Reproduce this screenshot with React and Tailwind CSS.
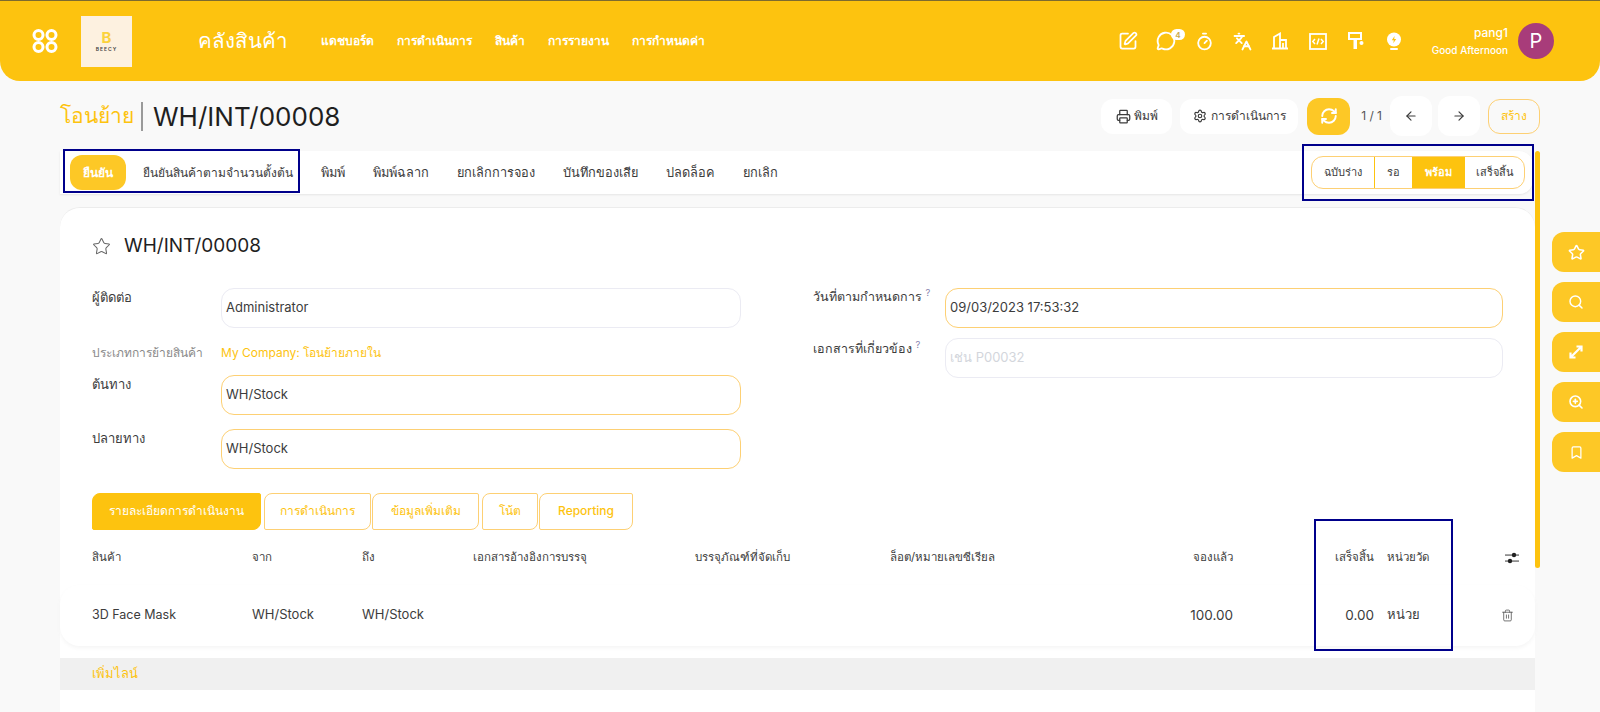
import React from 'react';
import { SquarePen, MessageCircle, Timer, Languages, Printer, Settings, RefreshCw, ArrowLeft, ArrowRight, Star, Search, ZoomIn, Bookmark, Trash2 } from 'lucide-react';

const navItems = ['แดชบอร์ด', 'การดำเนินการ', 'สินค้า', 'การรายงาน', 'การกำหนดค่า'];
const actions = ['พิมพ์', 'พิมพ์ฉลาก', 'ยกเลิกการจอง', 'บันทึกของเสีย', 'ปลดล็อค', 'ยกเลิก'];

const GridLogo = () => (
  <svg width="26" height="24" viewBox="0 0 26 24" fill="none" stroke="white" strokeWidth="3">
    <circle cx="6.5" cy="6" r="4.5" />
    <circle cx="19.5" cy="6" r="4.5" />
    <circle cx="6.5" cy="18" r="4.5" />
    <circle cx="19.5" cy="18" r="4.5" />
  </svg>
);

const BuildingIcon = () => (
  <svg width="18" height="18" viewBox="0 0 18 18" fill="none" stroke="white" strokeWidth="1.8">
    <path d="M1 16.5h16M3 16.5V5l6-3.5v15M9 8h6v8.5M12 11v5.5" />
  </svg>
);

const CodeIcon = () => (
  <svg width="18" height="17" viewBox="0 0 18 17" fill="none" stroke="white">
    <rect x="1" y="1" width="16" height="15" strokeWidth="1.8" />
    <path d="M6 6 3.8 8.5 6 11M12 6l2.2 2.5L12 11M10 5.5l-2 6" strokeWidth="1.5" />
  </svg>
);

const RollerIcon = () => (
  <svg width="16" height="18" viewBox="0 0 16 18" fill="white">
    <path d="M1 1h12v6H1z" fill="none" stroke="white" strokeWidth="2" />
    <rect x="5.5" y="7" width="3.5" height="10" />
    <circle cx="13.5" cy="11" r="2" />
  </svg>
);

const BulbIcon = () => (
  <svg width="16" height="19" viewBox="0 0 16 19" fill="white">
    <circle cx="8" cy="7.5" r="7" />
    <rect x="4" y="16" width="8" height="2" rx="1" />
    <path d="M8.6 4 5.8 8.2h2l-.5 3 2.9-4.3h-2z" fill="#fdc30f" />
  </svg>
);

const ExpandIcon = () => (
  <svg width="16" height="16" viewBox="0 0 16 16" fill="none" stroke="white" strokeWidth="2.2">
    <path d="M3 13 13 3M8.5 2.5h5v5M2.5 8.5v5h5" />
  </svg>
);

const SlidersIcon = () => (
  <svg width="14" height="12" viewBox="0 0 14 12" fill="#222">
    <rect x="0" y="2.6" width="14" height="0.9" />
    <rect x="0" y="8.6" width="14" height="0.9" />
    <circle cx="9" cy="3" r="2.2" />
    <circle cx="5" cy="9" r="2.2" />
  </svg>
);

const Field = ({ value, active, placeholder }) => (
  <div className={`flex h-[40px] flex-1 items-center rounded-[13px] border bg-white px-[4px] text-[13px] ${active ? 'border-[#fdd074]' : 'border-[#ebebf3]'} ${placeholder ? 'text-[#d3d6dc]' : 'text-[#3c3c3c]'}`}>
    {value}
  </div>
);

const Tab = ({ label, active }) => (
  <div className={`flex h-[37px] items-center justify-center rounded-tl-[8px] rounded-br-[8px] rounded-tr-[2px] rounded-bl-[2px] border text-[12px] font-medium ${active ? 'border-[#fdc30f] bg-[#fdc30f] text-white' : 'border-[#fdd074] bg-white text-[#fdc30f]'}`}>
    {label}
  </div>
);

const Row = ({ cols }) => (
  <div className="grid w-full grid-cols-[160px_110px_111px_222px_195px_250px_93px_141px_117px_1fr] items-center">
    {cols}
  </div>
);

export default function App() {
  return (
    <div className="relative h-[712px] w-[1600px] overflow-hidden bg-[#f9f9f9] font-['Inter','Noto_Sans',sans-serif] text-[#3c3c3c]">
      <header className="flex h-[81px] items-center rounded-b-[20px] border-t border-[#7d6b2f] bg-[#fdc30f] pl-[32px] pr-[46px] text-white">
        <GridLogo />
        <div className="ml-[23px] flex h-[51px] w-[51px] flex-col items-center justify-center bg-[#fdf1e0]">
          <span className="text-[15px] font-bold leading-[15px] text-[#fbd23c]">B</span>
          <span className="text-[5px] font-semibold leading-[8px] tracking-[1px] text-[#444]">BEECY</span>
        </div>
        <div className="ml-[66px] text-[20.5px] font-medium">คลังสินค้า</div>
        <nav className="ml-[33px] flex gap-[23px] text-[12px] font-semibold">
          {navItems.map((item) => <span key={item}>{item}</span>)}
        </nav>
        <div className="ml-[404px] flex items-center">
          <span className="flex w-[38px] justify-center"><SquarePen size={20} strokeWidth={2.1} /></span>
          <span className="relative flex w-[38px] justify-center">
            <MessageCircle size={20} strokeWidth={2.2} />
            <span className="absolute right-0 top-[-2px] flex h-[11px] w-[14px] items-center justify-center rounded-full bg-white text-[8px] font-semibold text-[#c9a94a]">4</span>
          </span>
          <span className="flex w-[38px] justify-center"><Timer size={19} strokeWidth={2.3} /></span>
          <span className="flex w-[38px] justify-center"><Languages size={19} strokeWidth={2.4} /></span>
          <span className="flex w-[38px] justify-center"><BuildingIcon /></span>
          <span className="flex w-[38px] justify-center"><CodeIcon /></span>
          <span className="flex w-[38px] justify-center"><RollerIcon /></span>
          <span className="flex w-[38px] justify-center"><BulbIcon /></span>
        </div>
        <div className="ml-auto flex flex-col items-end">
          <span className="text-[12px] font-medium leading-[16px]">pang1</span>
          <span className="mt-[2px] text-[10px] font-medium leading-[14px]">Good Afternoon</span>
        </div>
        <div className="ml-[10px] flex h-[36px] w-[36px] items-center justify-center rounded-full bg-[#a83c7a] text-[20px]">P</div>
      </header>

      <div className="mt-[15px] flex h-[40px] items-center pl-[60px] pr-[60px]">
        <span className="text-[21px] text-[#fdc30f]">โอนย้าย</span>
        <span className="ml-[7px] h-[29px] w-[2px] bg-[#9a9a9a]" />
        <span className="ml-[10px] text-[26px] text-[#1f1f1f]">WH/INT/00008</span>
        <div className="ml-auto flex items-center">
          <button className="flex h-[35px] w-[71px] items-center justify-center gap-[3px] rounded-[12px] bg-white text-[12px]"><Printer size={15} />พิมพ์</button>
          <button className="ml-[8px] flex h-[35px] w-[118px] items-center justify-center gap-[4px] rounded-[12px] bg-white text-[12px]"><Settings size={14} />การดำเนินการ</button>
          <button className="ml-[9px] flex h-[37px] w-[43px] items-center justify-center rounded-[12px] bg-[#fdc826] text-white"><RefreshCw size={18} strokeWidth={2.6} /></button>
          <span className="ml-[11px] text-[12px] text-[#555]">1 / 1</span>
          <button className="ml-[8px] flex h-[40px] w-[42px] items-center justify-center rounded-[12px] bg-white"><ArrowLeft size={14} /></button>
          <button className="ml-[6px] flex h-[40px] w-[42px] items-center justify-center rounded-[12px] bg-white"><ArrowRight size={14} /></button>
          <button className="ml-[8px] h-[35px] w-[52px] rounded-[12px] border border-[#fdd074] text-[12px] text-[#fdc30f]">สร้าง</button>
        </div>
      </div>

      <div className="ml-[60px] mt-[15px] flex h-[43px] w-[1473px] items-center rounded-r-[14px] bg-white pl-[10px] pr-[8px] shadow-[0_1px_2px_#e5e5e5]">
        <button className="h-[35px] w-[56px] rounded-[12px] bg-[#fdc826] text-[12px] font-semibold text-white">ยืนยัน</button>
        <span className="ml-[17px] text-[12px]">ยืนยันสินค้าตามจำนวนตั้งต้น</span>
        <div className="ml-[28px] flex gap-[28px] text-[12.75px]">
          {actions.map((item) => <span key={item}>{item}</span>)}
        </div>
        <div className="ml-auto flex h-[33px] w-[214px] overflow-hidden rounded-[12px] border border-[#fdd074] text-[11px]">
          <span className="flex w-[63px] items-center justify-center border-r border-[#fdc30f]">ฉบับร่าง</span>
          <span className="flex w-[37px] items-center justify-center">รอ</span>
          <span className="flex w-[53px] items-center justify-center bg-[#fdc30f] font-semibold text-white">พร้อม</span>
          <span className="flex flex-1 items-center justify-center">เสร็จสิ้น</span>
        </div>
      </div>

      <main className="ml-[60px] mt-[13px] h-[505px] w-[1475px] rounded-t-[20px] border-t border-[#ececec] bg-white">
        <div className="flex items-center pl-[32px] pt-[24px]">
          <Star size={19} strokeWidth={1.3} className="text-[#666]" />
          <span className="ml-[13px] text-[19px] text-[#1f1f1f]">WH/INT/00008</span>
        </div>

        <div className="mt-[27px] flex pl-[32px] pr-[32px]">
          <div className="flex w-[649px] flex-col">
            <div className="flex h-[40px] items-start">
              <span className="w-[129px] text-[13px] leading-[18px]">ผู้ติดต่อ</span>
              <Field value="Administrator" />
            </div>
            <div className="mt-[15px] flex h-[20px] items-center">
              <span className="w-[129px] text-[12px] text-[#8a8a8a]">ประเภทการย้ายสินค้า</span>
              <span className="text-[12px] text-[#fdc30f]">My Company: โอนย้ายภายใน</span>
            </div>
            <div className="mt-[12px] flex h-[40px] items-start">
              <span className="w-[129px] text-[13px] leading-[18px]">ต้นทาง</span>
              <Field value="WH/Stock" active />
            </div>
            <div className="mt-[14px] flex h-[40px] items-start">
              <span className="w-[129px] text-[13px] leading-[18px]">ปลายทาง</span>
              <Field value="WH/Stock" active />
            </div>
          </div>
          <div className="ml-[72px] flex w-[690px] flex-col">
            <div className="flex h-[40px] items-start">
              <span className="w-[132px] shrink-0 whitespace-nowrap text-[12.5px] leading-[18px]">วันที่ตามกำหนดการ <sup className="text-[#8a85b0]">?</sup></span>
              <Field value="09/03/2023 17:53:32" active />
            </div>
            <div className="mt-[10px] flex h-[40px] items-start">
              <span className="w-[132px] shrink-0 whitespace-nowrap pt-[2px] text-[12.5px]">เอกสารที่เกี่ยวข้อง <sup className="text-[#8a85b0]">?</sup></span>
              <Field value="เช่น P00032" placeholder />
            </div>
          </div>
        </div>

        <div className="mt-[24px] flex pl-[32px]">
          <div className="w-[169px]"><Tab label="รายละเอียดการดำเนินงาน" active /></div>
          <div className="ml-[3px] w-[107px]"><Tab label="การดำเนินการ" /></div>
          <div className="ml-[1px] w-[107px]"><Tab label="ข้อมูลเพิ่มเติม" /></div>
          <div className="ml-[3px] w-[56px]"><Tab label="โน้ต" /></div>
          <div className="ml-[1px] w-[94px]"><Tab label="Reporting" /></div>
        </div>

        <div className="flex h-[55px] items-center pl-[32px] pr-[16px] pt-[1px] text-[11.5px]">
          <Row cols={<>
            <span>สินค้า</span>
            <span>จาก</span>
            <span>ถึง</span>
            <span>เอกสารอ้างอิงการบรรจุ</span>
            <span>บรรจุภัณฑ์ที่จัดเก็บ</span>
            <span>ล็อต/หมายเลขซีเรียล</span>
            <span className="text-right">จองแล้ว</span>
            <span className="text-right">เสร็จสิ้น</span>
            <span className="pl-[13px]">หน่วยวัด</span>
            <span className="flex justify-end"><SlidersIcon /></span>
          </>} />
        </div>

        <div className="flex h-[61px] items-center rounded-[20px] pl-[32px] pr-[21px] text-[13px] shadow-[0_2px_4px_#f5f5f5]">
          <Row cols={<>
            <span className="text-[12.5px]">3D Face Mask</span>
            <span>WH/Stock</span>
            <span>WH/Stock</span>
            <span />
            <span />
            <span />
            <span className="text-right text-[13.5px]">100.00</span>
            <span className="text-right text-[13.5px]">0.00</span>
            <span className="pl-[13px]">หน่วย</span>
            <span className="flex justify-end"><Trash2 size={13} strokeWidth={1.5} className="text-[#555]" /></span>
          </>} />
        </div>

        <div className="mt-[12px] flex h-[32px] items-center bg-[#f0f0f0] pl-[32px] text-[13px] text-[#fdc30f]">เพิ่มไลน์</div>
      </main>

      {/* highlight boxes drawn over the screenshot */}
      <div className="absolute left-[63px] top-[149px] h-[44px] w-[237px] border-2 border-[#00008b]" />
      <div className="absolute left-[1302px] top-[144px] h-[57px] w-[232px] border-2 border-[#00008b]" />
      <div className="absolute left-[1314px] top-[519px] h-[132px] w-[139px] border-2 border-[#00008b]" />

      <div className="absolute left-[1535px] top-[151px] h-[417px] w-[5px] rounded-full bg-[#fdc30f]" />

      <div className="absolute right-0 top-[232px] flex flex-col gap-[10px]">
        <span className="flex h-[40px] w-[48px] items-center justify-center rounded-l-[12px] bg-[#fdc826] text-white"><Star size={17} strokeWidth={2.2} /></span>
        <span className="flex h-[40px] w-[48px] items-center justify-center rounded-l-[12px] bg-[#fdc826] text-white"><Search size={16} strokeWidth={2.2} /></span>
        <span className="flex h-[40px] w-[48px] items-center justify-center rounded-l-[12px] bg-[#fdc826] text-white"><ExpandIcon /></span>
        <span className="flex h-[40px] w-[48px] items-center justify-center rounded-l-[12px] bg-[#fdc826] text-white"><ZoomIn size={16} strokeWidth={2.4} /></span>
        <span className="flex h-[40px] w-[48px] items-center justify-center rounded-l-[12px] bg-[#fdc826] text-white"><Bookmark size={15} strokeWidth={2} /></span>
      </div>
    </div>
  );
}
